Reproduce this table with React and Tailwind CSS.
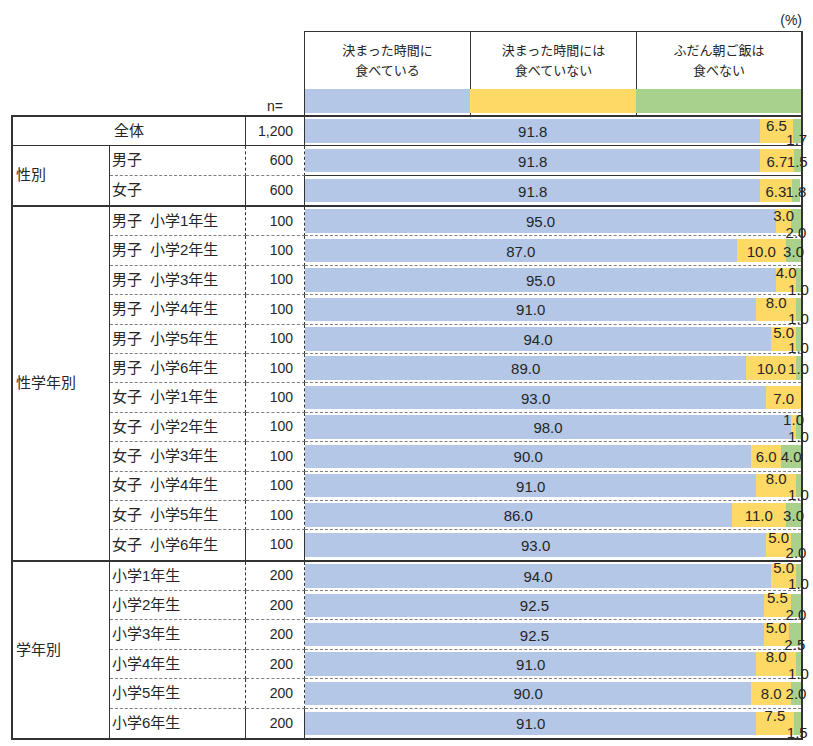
import React from 'react';

const SEG = ['bg-[#b4c7e7]', 'bg-[#ffd966]', 'bg-[#a9d18e]'];

function Bar({ v, d }) {
  let acc = 0;
  const centers = v.map((x) => {
    const c = acc + x / 2;
    acc += x;
    return c;
  });
  return (
    <div className="relative flex h-[23.5px] w-full">
      {v.map((x, i) => (
        <div key={i} className={SEG[i]} style={{ width: `${x}%` }} />
      ))}
      {v.map((x, i) =>
        x ? (
          <span
            key={'l' + i}
            className="absolute top-1/2 z-10 whitespace-nowrap text-[15px] leading-none"
            style={{
              left: `${centers[i]}%`,
              transform: `translate(-50%, calc(-50% + ${d[i] || 0}px))`,
            }}
          >
            {x.toFixed(1)}
          </span>
        ) : null
      )}
    </div>
  );
}

const total = { v: [91.8, 6.5, 1.7], d: [0, -6, 8] };

const sexRows = [
  { a: '男子', n: '600', v: [91.8, 6.7, 1.5], d: [0, 0, 0] },
  { a: '女子', n: '600', v: [91.8, 6.3, 1.8], d: [0, 0, 0] },
];

const sexGradeRows = [
  { a: '男子', b: '小学1年生', v: [95, 3, 2], d: [0, -6, 11] },
  { a: '男子', b: '小学2年生', v: [87, 10, 3], d: [0, 0, 0] },
  { a: '男子', b: '小学3年生', v: [95, 4, 1], d: [0, -8, 9] },
  { a: '男子', b: '小学4年生', v: [91, 8, 1], d: [0, -7, 9] },
  { a: '男子', b: '小学5年生', v: [94, 5, 1], d: [0, -7, 8] },
  { a: '男子', b: '小学6年生', v: [89, 10, 1], d: [0, 0, 0] },
  { a: '女子', b: '小学1年生', v: [93, 7, 0], d: [0, 0, 0] },
  { a: '女子', b: '小学2年生', v: [98, 1, 1], d: [0, -8, 9] },
  { a: '女子', b: '小学3年生', v: [90, 6, 4], d: [0, 0, 0] },
  { a: '女子', b: '小学4年生', v: [91, 8, 1], d: [0, -8, 8.5] },
  { a: '女子', b: '小学5年生', v: [86, 11, 3], d: [0, 0, 0] },
  { a: '女子', b: '小学6年生', v: [93, 5, 2], d: [0, -8, 7.5] },
];

const gradeRows = [
  { b: '小学1年生', v: [94, 5, 1], d: [0, -9, 7.5] },
  { b: '小学2年生', v: [92.5, 5.5, 2], d: [0, -8, 9] },
  { b: '小学3年生', v: [92.5, 5, 2.5], d: [0, -8, 9.5] },
  { b: '小学4年生', v: [91, 8, 1], d: [0, -8, 9] },
  { b: '小学5年生', v: [90, 8, 2], d: [0, 0, 0] },
  { b: '小学6年生', v: [91, 7.5, 1.5], d: [0, -8, 9] },
];

function Row({ label, n, v, d, h, last, chartSolid }) {
  const dash = last ? '' : 'border-b border-dashed border-[#7f7f7f]';
  const chartBorder = last
    ? ''
    : chartSolid
    ? 'border-b border-[#333]'
    : 'border-b border-dashed border-[#7f7f7f]';
  return (
    <div className={`flex ${h}`}>
      <div className={`flex w-[136px] items-center border-r border-r-[#333] pl-[2px] text-[15px] ${dash}`}>
        {label}
      </div>
      <div className={`flex w-[59px] items-center justify-end border-r border-r-[#333] pr-[11px] text-[14px] ${dash}`}>
        {n}
      </div>
      <div className={`flex flex-1 items-center ${chartBorder}`}>
        <Bar v={v} d={d} />
      </div>
    </div>
  );
}

export default function App() {
  return (
    <div className="h-[746px] w-[813px] bg-white pt-[10px] text-[#262626] [font-family:'Liberation_Sans','Noto_Sans_CJK_JP',sans-serif]">
      <div className="flex h-[21px] items-center justify-end pr-[11px] text-[14px]">(%)</div>

      <div className="flex">
        <div className="flex w-[304px] flex-col justify-end pb-[1px] pr-[21px] text-right text-[14px] leading-[16px]">
          n=
        </div>
        <div className="w-[499px] border-l border-r-2 border-t border-[#333]">
          <div className="flex h-[57px] text-center text-[13px] leading-[20px]">
            <div className="flex w-[166px] items-center justify-center border-r border-[#333]">
              決まった時間に
              <br />
              食べている
            </div>
            <div className="flex w-[166px] items-center justify-center border-r border-[#333]">
              決まった時間には
              <br />
              食べていない
            </div>
            <div className="flex flex-1 items-center justify-center">
              ふだん朝ご飯は
              <br />
              食べない
            </div>
          </div>
          <div className="flex h-[24px]">
            <div className="w-[165px] bg-[#b4c7e7]" />
            <div className="w-[166px] bg-[#ffd966]" />
            <div className="flex-1 bg-[#a9d18e]" />
          </div>
          <div className="flex h-[2px]">
            <div className="w-[166px] border-r border-[#333]" />
            <div className="w-[166px] border-r border-[#333]" />
            <div className="flex-1" />
          </div>
        </div>
      </div>

      <div className="ml-[11px] w-[792px] border-2 border-[#333]">
        {/* 全体 */}
        <div className="flex h-[29px] border-b border-[#333]">
          <div className="flex w-[233px] items-center justify-center border-r border-[#333] text-[15px]">全体</div>
          <div className="flex w-[59px] items-center justify-end border-r border-[#333] pr-[11px] text-[14px]">1,200</div>
          <div className="flex flex-1 items-center">
            <Bar v={total.v} d={total.d} />
          </div>
        </div>

        {/* 性別 */}
        <div className="flex border-b-2 border-[#333]">
          <div className="flex w-[97px] items-center border-r border-[#333] pl-[3px] text-[15px]">性別</div>
          <div className="flex flex-1 flex-col">
            {sexRows.map((r, i) => (
              <Row
                key={i}
                label={r.a}
                n={r.n}
                v={r.v}
                d={r.d}
                h={i === 0 ? 'h-[30px]' : 'h-[29px]'}
                last={i === sexRows.length - 1}
                chartSolid
              />
            ))}
          </div>
        </div>

        {/* 性学年別 */}
        <div className="flex border-b-2 border-[#333]">
          <div className="flex w-[97px] items-center border-r border-[#333] pl-[3px] text-[15px]">性学年別</div>
          <div className="flex flex-1 flex-col">
            {sexGradeRows.map((r, i) => (
              <Row
                key={i}
                label={
                  <>
                    <span>{r.a}</span>
                    <span className="ml-[8px]">{r.b}</span>
                  </>
                }
                n="100"
                v={r.v}
                d={r.d}
                h="h-[29.4px]"
                last={i === sexGradeRows.length - 1}
              />
            ))}
          </div>
        </div>

        {/* 学年別 */}
        <div className="flex">
          <div className="flex w-[97px] items-center border-r border-[#333] pl-[3px] text-[15px]">学年別</div>
          <div className="flex flex-1 flex-col">
            {gradeRows.map((r, i) => (
              <Row
                key={i}
                label={r.b}
                n="200"
                v={r.v}
                d={r.d}
                h="h-[29.4px]"
                last={i === gradeRows.length - 1}
              />
            ))}
          </div>
        </div>
      </div>
    </div>
  );
}
